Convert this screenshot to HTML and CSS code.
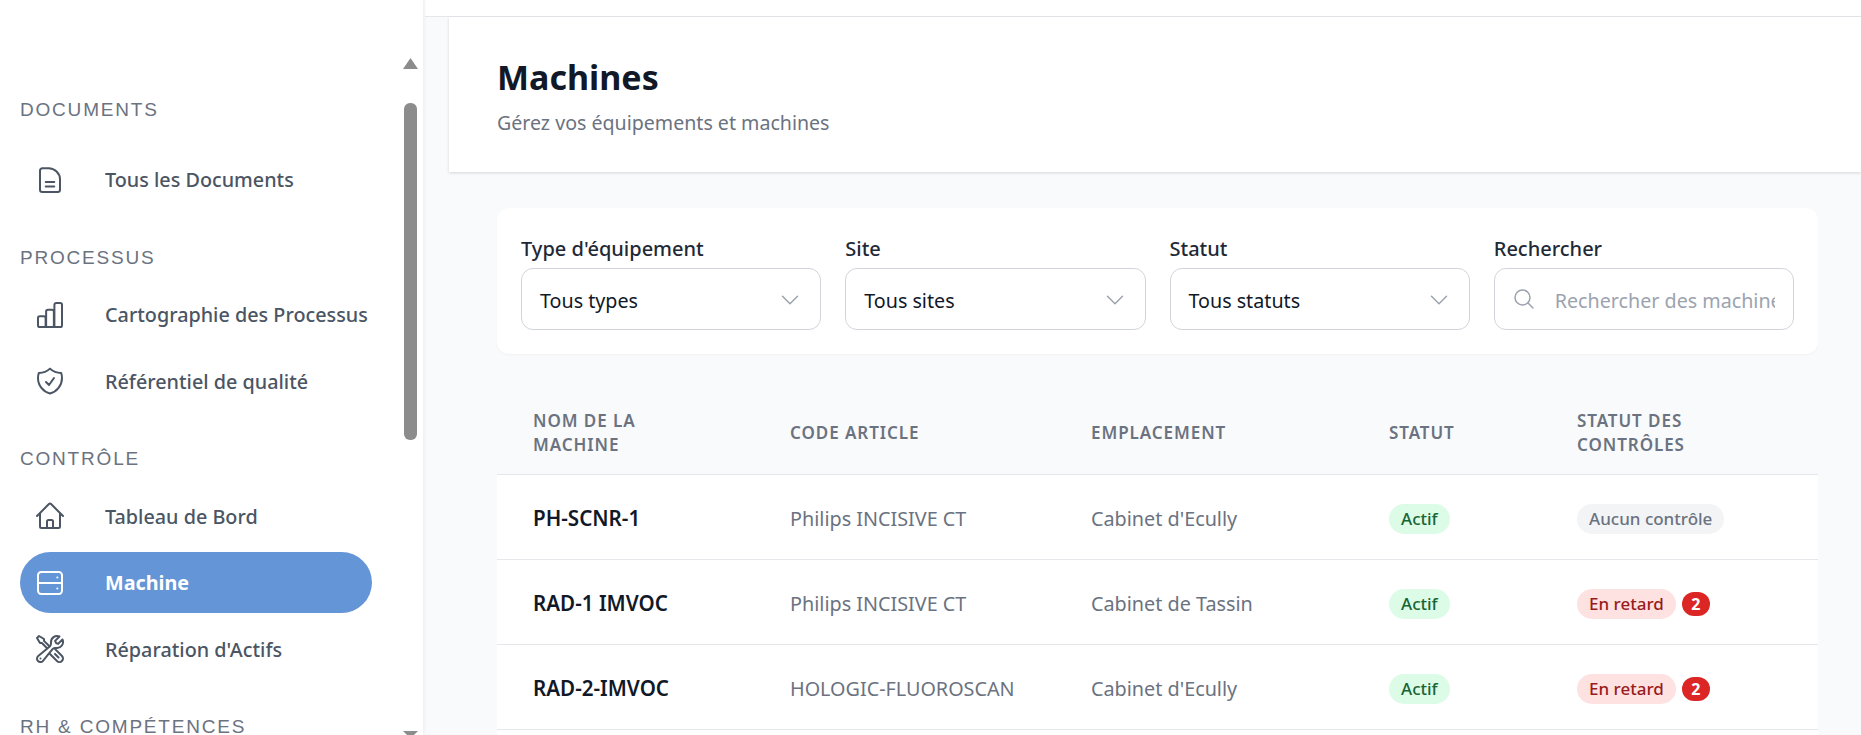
FILE: index.html
```html
<!DOCTYPE html>
<html lang="fr">
<head>
  <meta charset="UTF-8">
  <title>Machines</title>
  <link rel="stylesheet" href="styles.css">
</head>
<body>
  <aside class="sidebar">
    <div class="side-label first">DOCUMENTS</div>
    <ul class="nav">
      <li>
        <svg class="icon" viewBox="0 0 24 24"><path d="M11 3.2H6.2A1.7 1.7 0 0 0 4.5 4.9v14.4A1.7 1.7 0 0 0 6.2 21h11.600A1.700 1.700 0 0 0 19.500 19.300V11.500C19.500 7 15.500 3.200 11 3.200z"/><path d="M8.800 13.500h6.400M8.800 16.800h6.400"/></svg>
        <span>Tous les Documents</span>
      </li>
    </ul>
    <div class="side-label">PROCESSUS</div>
    <ul class="nav">
      <li>
        <svg class="icon" viewBox="0 0 24 24"><path d="M8.700 21H4.400A1.400 1.400 0 0 1 3 19.600v-5.200A1.400 1.400 0 0 1 4.400 13h2.900a1.400 1.400 0 0 1 1.400 1.400zM14.900 21H9.100V9.400A1.400 1.400 0 0 1 10.500 8h3a1.400 1.400 0 0 1 1.400 1.400zM15.300 21V4.400A1.400 1.400 0 0 1 16.700 3h2.900A1.400 1.400 0 0 1 21 4.400v15.200a1.400 1.400 0 0 1-1.400 1.400z"/></svg>
        <span>Cartographie des Processus</span>
      </li>
      <li>
        <svg class="icon" viewBox="0 0 24 24"><path d="M9 12.750L11.250 15 15 9.750m-3-7.036A11.959 11.959 0 0 1 3.598 6 11.990 11.990 0 0 0 3 9.749c0 5.592 3.824 10.290 9 11.623 5.176-1.332 9-6.030 9-11.622 0-1.310-.21-2.571-.598-3.751h-.152c-3.196 0-6.100-1.248-8.250-3.285z"/></svg>
        <span>Référentiel de qualité</span>
      </li>
    </ul>
    <div class="side-label">CONTRÔLE</div>
    <ul class="nav">
      <li>
        <svg class="icon" viewBox="0 0 24 24"><path d="M2.250 12l8.954-8.955c.44-.439 1.152-.439 1.591 0L21.750 12M4.500 9.750v10.125c0 .621.504 1.125 1.125 1.125H9.750v-4.875c0-.621.504-1.125 1.125-1.125h2.250c.621 0 1.125.504 1.125 1.125V21h4.125c.621 0 1.125-.504 1.125-1.125V9.750M8.250 21h8.250"/></svg>
        <span>Tableau de Bord</span>
      </li>
      <li class="active">
        <svg class="icon" viewBox="0 0 24 24"><rect x="3" y="3.800" width="18" height="16.400" rx="2.400"/><path d="M3 12h18M17.500 7.900h.01M17.500 16.100h.01"/></svg>
        <span>Machine</span>
      </li>
      <li>
        <svg class="icon" viewBox="0 0 24 24"><path d="M11.420 15.170L17.250 21A2.652 2.652 0 0 0 21 17.250l-5.877-5.877M11.420 15.170l2.496-3.030c.317-.384.74-.626 1.208-.766M11.420 15.170l-4.655 5.653a2.548 2.548 0 1 1-3.586-3.586l6.837-5.630m5.108-.233c.55-.164 1.163-.188 1.743-.14a4.500 4.500 0 0 0 4.486-6.336l-3.276 3.277a3.004 3.004 0 0 1-2.250-2.250l3.276-3.276a4.500 4.500 0 0 0-6.336 4.486c.091 1.076-.071 2.264-.904 2.950l-.102.085m-1.745 1.437L5.909 7.500H4.500L2.250 3.750l1.500-1.500L7.500 4.500v1.409l4.260 4.260m-1.745 1.437l1.745-1.437m6.615 8.206L15.750 15.750M4.867 19.125h.008v.008h-.008v-.008z"/></svg>
        <span>Réparation d'Actifs</span>
      </li>
    </ul>
    <div class="side-label last">RH &amp; COMPÉTENCES</div>

    <div class="scroll-up"></div>
    <div class="scroll-thumb"></div>
    <div class="scroll-down"></div>
  </aside>

  <main class="main">
    <div class="topbar"></div>
    <div class="page-head">
      <h1>Machines</h1>
      <p>Gérez vos équipements et machines</p>
    </div>

    <div class="page-body">
      <div class="filters">
        <div class="filter">
          <label>Type d'équipement</label>
          <div class="select">
            <span>Tous types</span>
            <svg class="chevron" viewBox="0 0 24 24"><path d="M19.500 8.250l-7.500 7.500-7.500-7.500"/></svg>
          </div>
        </div>
        <div class="filter">
          <label>Site</label>
          <div class="select">
            <span>Tous sites</span>
            <svg class="chevron" viewBox="0 0 24 24"><path d="M19.500 8.250l-7.500 7.500-7.500-7.500"/></svg>
          </div>
        </div>
        <div class="filter">
          <label>Statut</label>
          <div class="select">
            <span>Tous statuts</span>
            <svg class="chevron" viewBox="0 0 24 24"><path d="M19.500 8.250l-7.500 7.500-7.500-7.500"/></svg>
          </div>
        </div>
        <div class="filter">
          <label>Rechercher</label>
          <div class="search">
            <svg class="search-icon" viewBox="0 0 24 24"><path d="M21 21l-5.197-5.197m0 0A7.500 7.500 0 1 0 5.196 5.196a7.500 7.500 0 0 0 10.607 10.607z"/></svg>
            <input type="text" placeholder="Rechercher des machines...">
          </div>
        </div>
      </div>

      <table class="machines">
        <colgroup>
          <col class="col-name">
          <col class="col-code">
          <col class="col-place">
          <col class="col-status">
          <col class="col-checks">
        </colgroup>
        <thead>
          <tr>
            <th>Nom de la machine</th>
            <th>Code article</th>
            <th>Emplacement</th>
            <th>Statut</th>
            <th>Statut des contrôles</th>
          </tr>
        </thead>
        <tbody>
          <tr>
            <td class="name">PH-SCNR-1</td>
            <td>Philips INCISIVE CT</td>
            <td>Cabinet d'Ecully</td>
            <td><span class="badge green">Actif</span></td>
            <td><span class="badge gray">Aucun contrôle</span></td>
          </tr>
          <tr>
            <td class="name">RAD-1 IMVOC</td>
            <td>Philips INCISIVE CT</td>
            <td>Cabinet de Tassin</td>
            <td><span class="badge green">Actif</span></td>
            <td><span class="badge red">En retard</span><span class="count">2</span></td>
          </tr>
          <tr>
            <td class="name">RAD-2-IMVOC</td>
            <td>HOLOGIC-FLUOROSCAN</td>
            <td>Cabinet d'Ecully</td>
            <td><span class="badge green">Actif</span></td>
            <td><span class="badge red">En retard</span><span class="count">2</span></td>
          </tr>
          <tr class="cut">
            <td colspan="5"></td>
          </tr>
        </tbody>
      </table>
    </div>
  </main>
</body>
</html>
```

FILE: styles.css
```css
*{
  margin: 0;
  padding: 0;
  box-sizing: border-box;
  list-style: none;
}
html,body{
  height: 735px;
  overflow: hidden;
}
body{
  display: flex;
  background: #f9fafb;
  font-family: "Noto Sans", "Open Sans", sans-serif;
  color: #111827;
}

/* sidebar */
.sidebar{
  width: 423px;
  height: 735px;
  flex-shrink: 0;
  position: relative;
  padding: 97.5px 0 0 20px;
  background: #fff;
  box-shadow: 1px 0 4px rgba(0,0,0,.06);
  overflow: hidden;
}
.side-label{
  height: 24px;
  margin-top: 34.5px;
  margin-bottom: 15.5px;
  padding-top: 1px;
  font-family: "Liberation Sans", sans-serif;
  font-size: 19px;
  line-height: 23px;
  letter-spacing: 1.8px;
  color: #6b7280;
}
.side-label.first{
  margin-top: 0;
  margin-bottom: 27.5px;
  padding-top: 0;
}
.side-label.last{
  height: 20px;
  margin-bottom: 0;
  overflow: hidden;
}
.nav{
  width: 352px;
  display: flex;
  flex-direction: column;
  gap: 5.5px;
}
.nav li{
  height: 61px;
  display: flex;
  align-items: center;
  gap: 39px;
  padding-left: 14px;
  border-radius: 31px;
  font-size: 19.8px;
  font-weight: 500;
  color: #4b5563;
}
.nav li.active{
  background: #6495d6;
  color: #fff;
  font-weight: 700;
}
.icon{
  width: 32px;
  height: 32px;
  flex-shrink: 0;
  fill: none;
  stroke: currentColor;
  stroke-width: 1.5;
  stroke-linecap: round;
  stroke-linejoin: round;
}
.scroll-thumb{
  position: absolute;
  left: 404px;
  top: 103px;
  width: 13px;
  height: 337px;
  border-radius: 6px;
  background: #8c8c8c;
}
.scroll-up{
  position: absolute;
  left: 403px;
  top: 58px;
  width: 15px;
  height: 11px;
  background: #8c8c8c;
  clip-path: polygon(50% 0, 100% 100%, 0 100%);
}
.scroll-down{
  position: absolute;
  left: 403px;
  top: 731px;
  width: 15px;
  height: 4px;
  background: #8c8c8c;
  clip-path: polygon(0 0, 100% 0, 73% 100%, 27% 100%);
}

/* main */
.main{
  flex: 1;
  min-width: 0;
  padding-left: 2px;
}
.topbar{
  height: 17px;
  background: #fff;
  border-bottom: 1px solid #e5e7eb;
}
.page-head{
  height: 155px;
  margin-left: 24px;
  padding: 36px 0 0 48px;
  background: #fff;
  box-shadow: 0 1px 3px rgba(0,0,0,.14);
}
.page-head h1{
  font-size: 34px;
  line-height: 48px;
  font-weight: 700;
}
.page-head p{
  margin-top: 9px;
  font-size: 19.6px;
  line-height: 26px;
  color: #6b7280;
}
.page-body{
  margin: 36px 43px 0 72px;
}

/* filters */
.filters{
  height: 146px;
  display: grid;
  grid-template-columns: repeat(4, 1fr);
  gap: 24px;
  padding: 28px 24px 0;
  background: #fff;
  border-radius: 12px;
  box-shadow: 0 1px 2px rgba(0,0,0,.04);
}
.filter label{
  display: block;
  height: 32px;
  font-size: 20px;
  line-height: 26px;
  font-weight: 500;
  color: #1f2937;
}
.select,.search{
  height: 62px;
  border: 1px solid #d1d5db;
  border-radius: 12px;
  background: #fff;
  font-size: 19.7px;
}
.select{
  display: flex;
  align-items: center;
  justify-content: space-between;
  padding: 0 18px 0 18px;
}
.select span{
  padding-top: 2px;
}
.chevron{
  width: 24px;
  height: 24px;
  margin-top: 1px;
  fill: none;
  stroke: #9ca3af;
  stroke-width: 1.5;
  stroke-linecap: round;
  stroke-linejoin: round;
}
.search{
  position: relative;
}
.search-icon{
  position: absolute;
  left: 17px;
  top: 18px;
  width: 24px;
  height: 24px;
  fill: none;
  stroke: #9ca3af;
  stroke-width: 1.5;
  stroke-linecap: round;
  stroke-linejoin: round;
}
.search input{
  width: 100%;
  height: 100%;
  padding: 2px 18px 0 60px;
  border: 0;
  outline: 0;
  background: transparent;
  border-radius: 12px;
  font-family: inherit;
  font-size: 19.7px;
  text-overflow: clip;
}
.search input::placeholder{
  color: #9ca3af;
}

/* table */
.machines{
  width: 1321px;
  margin-top: 36px;
  table-layout: fixed;
  border-collapse: collapse;
}
.col-name{
  width: 257px;
}
.col-code{
  width: 301px;
}
.col-place{
  width: 298px;
}
.col-status{
  width: 188px;
}
.col-checks{
  width: 277px;
}
.machines th{
  height: 84px;
  padding: 2px 36px 0;
  text-align: left;
  font-size: 17px;
  line-height: 24px;
  font-weight: 600;
  letter-spacing: .055em;
  text-transform: uppercase;
  color: #6b7280;
  border-bottom: 1px solid #e5e7eb;
}
.machines tbody tr{
  background: #fff;
}
.machines td{
  height: 85px;
  padding: 3px 36px 0;
  font-size: 19.8px;
  color: #6b7280;
  border-bottom: 1px solid #e5e7eb;
}
.machines td.name{
  padding-top: 2px;
  font-size: 20.6px;
  font-weight: 600;
  color: #111827;
}
.machines .cut td{
  height: 6px;
  padding: 0;
  border-bottom: 0;
}
.badge{
  display: inline-block;
  height: 30px;
  margin-top: 1px;
  padding: 0 12px;
  border-radius: 15px;
  font-size: 17px;
  line-height: 30px;
  font-weight: 500;
  vertical-align: middle;
}
.badge.green{
  background: #dcfce7;
  color: #166534;
}
.badge.gray{
  background: #f3f4f6;
  color: #6b7280;
}
.badge.red{
  background: #fee2e2;
  color: #991b1b;
}
.count{
  display: inline-block;
  width: 28px;
  height: 24px;
  margin-top: 1px;
  margin-left: 6px;
  border-radius: 12px;
  background: #dc2626;
  color: #fff;
  font-size: 16px;
  line-height: 24px;
  font-weight: 700;
  text-align: center;
  vertical-align: middle;
}
```
